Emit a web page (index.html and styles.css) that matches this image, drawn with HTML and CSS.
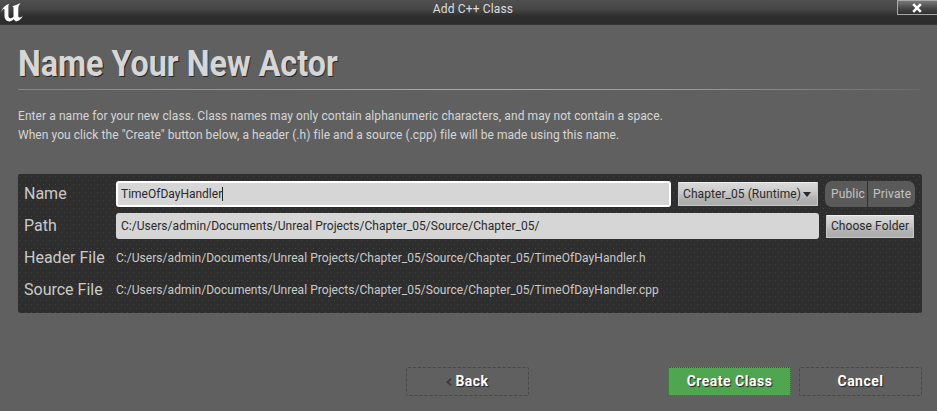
FILE: index.html
```html
<!DOCTYPE html>
<html lang="en">
<head>
<meta charset="utf-8">
<title>Add C++ Class</title>
<link rel="stylesheet" href="styles.css">
</head>
<body>
<header class="titlebar">
  <svg class="logo" viewBox="0 0 24 24" width="24" height="24"><path fill="#fff" d="M1 12.5C2 8 5 5 9.500 3.500C8.500 4.500 8.400 5.500 8.400 7V15.500C8.400 17.400 9.200 18.200 10.500 18.200C11.700 18.200 12.800 17.600 13.500 16.500V8C13.500 7 13 6.500 12 6.500C14.500 5.500 17.500 4.500 20.500 3C19 5 18.300 6.500 18.300 8.500V15.500C18.300 17 18.800 17.500 19.700 17.500C20.700 17.500 22 16.500 23 15.200C21.800 18.500 19.500 20.800 16 21.500L13.600 19.200C12 21 9.500 22 7.500 21C5.500 20 4.500 18.500 4.500 16V10C4.500 9 4.100 8.700 3.400 9C2.500 9.500 1.700 11 1 12.500Z"/></svg>
  <span class="caption">Add C++ Class</span>
  <button class="close" aria-label="Close"><svg viewBox="0 0 10 10" width="10" height="10"><path d="M1.200 1.200L8.800 8.800M8.800 1.200L1.200 8.800" stroke="#fff" stroke-width="2.600"/></svg></button>
</header>
<main>
  <h1><span>Name Your New Actor</span></h1>
  <div class="rule"></div>
  <div class="intro">
    <p><span class="intro-a">Enter a name for your new class. Class names may only contain alphanumeric characters, and may not contain a space.</span></p>
    <p><span class="intro-b">When you click the "Create" button below, a header (.h) file and a source (.cpp) file will be made using this name.</span></p>
  </div>
  <section class="panel">
    <div class="row">
      <label>Name</label>
      <div class="field focused"><span class="typed">TimeOfDayHandler</span><i class="caret"></i></div>
      <button class="light combo"><span>Chapter_05 (Runtime)</span><i class="arrow"></i></button>
      <div class="toggle"><span class="public">Public</span><span class="private">Private</span></div>
    </div>
    <div class="row">
      <label>Path</label>
      <div class="field"><span class="path">C:/Users/admin/Documents/Unreal Projects/Chapter_05/Source/Chapter_05/</span></div>
      <button class="light choose">Choose Folder</button>
    </div>
    <div class="row">
      <label>Header File</label>
      <span class="value">C:/Users/admin/Documents/Unreal Projects/Chapter_05/Source/Chapter_05/TimeOfDayHandler.h</span>
    </div>
    <div class="row">
      <label>Source File</label>
      <span class="value">C:/Users/admin/Documents/Unreal Projects/Chapter_05/Source/Chapter_05/TimeOfDayHandler.cpp</span>
    </div>
  </section>
  <footer>
    <button class="action back"><svg width="6" height="8" viewBox="0 0 6 8"><path d="M5 .7L1.500 4L5 7.300" fill="none" stroke="#3c3c3c" stroke-width="1.800"/></svg>Back</button>
    <button class="action create">Create Class</button>
    <button class="action">Cancel</button>
  </footer>
</main>
</body>
</html>
```
FILE: styles.css
```css
* { box-sizing: border-box; }
body {
  margin: 0;
  width: 937px;
  height: 411px;
  overflow: hidden;
  background: #606060;
  color: #d6d6d6;
  font: 12px/18px Roboto, sans-serif;
}
button { margin: 0; padding: 0; font: inherit; }
.titlebar {
  display: grid;
  grid-template-columns: 41px 1fr 40px;
  height: 25px;
  background: linear-gradient(#505050, #464646 35%, #2e2e2e 65%, #2c2c2c 95%, #3c3c3c);
}
.logo { display: block; }
.caption { text-align: center; padding-left: 8px; color: #dedede; letter-spacing: .15px; }
.close {
  display: flex;
  align-items: center;
  justify-content: center;
  height: 15px;
  padding-right: 2px;
  border: 1px solid #a8a8a8;
  border-right: 0;
  background: linear-gradient(#777, #444 60%, #303030);
}
main { padding: 0 15px 0 18px; }
h1 {
  margin: 0;
  height: 64px;
  padding-top: 18px;
  font-size: 37px;
  line-height: 42px;
  font-weight: 700;
  white-space: nowrap;
  text-shadow: 1px 1px 0 #252525;
}
h1 span { display: inline-block; transform: scaleX(.873); transform-origin: 0 50%; }
.rule {
  height: 1px;
  margin-right: 2px;
  background: linear-gradient(90deg, #858585, #a6aaa6 50%, #999 75%, #6a6a6a);
}
.intro { padding-top: 17px; height: 84px; white-space: nowrap; }
.intro p { margin: 0; height: 19px; }
.intro-a { letter-spacing: .078px; }
.intro-b { letter-spacing: .056px; }
.panel {
  width: 904px;
  height: 139px;
  padding: 4px 7px 4px 6px;
  border-radius: 2px;
  background-color: #2e2e2e;
  background-image: linear-gradient(#424242, #424242), linear-gradient(#424242, #424242);
  background-size: 1px 1px;
  background-image:
    conic-gradient(from 0deg at 1px 1px, transparent 75%, #444 0),
    conic-gradient(from 0deg at 1px 1px, transparent 75%, #444 0);
  background-size: 6px 8px;
  background-position: 1px 2px, 4px 6px;
}
.row { display: flex; align-items: center; height: 32px; white-space: nowrap; }
label { flex: 0 0 92px; font-size: 16px; color: #cacaca; }
.field {
  flex: 1;
  display: flex;
  align-items: center;
  height: 26px;
  padding-left: 5px;
  margin-right: 7px;
  border-radius: 3px;
  background: #d6d6d6;
  color: #292929;
}
.focused { padding-left: 3px; border: 2px solid #fff; }
.caret { width: 1px; height: 14px; background: #222; }
.light {
  border: 1px solid #c8c8c8;
  border-top-color: #eee;
  border-radius: 1px;
  background: linear-gradient(#dadada, #cdcdcd 35%, #b0b0b0 75%, #adadad);
  color: #292929;
}
.combo { display: flex; align-items: center; width: 140px; height: 24px; margin-right: 7px; padding-left: 4px; letter-spacing: .07px; }
.arrow { margin-left: 2px; border: 4.5px solid transparent; border-top: 5px solid #292929; border-bottom: 0; }
.toggle { display: flex; width: 90px; height: 26px; border-radius: 7px; overflow: hidden; gap: 1px; line-height: 26px; color: #c4c4c4; letter-spacing: .15px; }
.toggle span { background: #5a5a5a; }
.public { width: 42px; padding-left: 6px; }
.private { flex: 1; padding-left: 5px; }
.choose { width: 88px; height: 23px; margin-right: 1px; letter-spacing: .08px; }
.path, .value { letter-spacing: .04px; }
.value { color: #cacaca; }
footer { display: flex; justify-content: flex-end; height: 83px; padding-top: 54px; }
.action {
  width: 123px;
  height: 29px;
  padding-bottom: 2px;
  border: 1px dashed #484848;
  border-radius: 2px;
  background: transparent;
  color: #fff;
  font-size: 14px;
  font-weight: 700;
  letter-spacing: .5px;
  text-shadow: 1px 1px 1px #222;
}
.back { margin-right: 139px; }
.back svg { margin-right: 3px; }
.create { margin-right: 8px; background: #50a550; border-style: dotted; }
```
